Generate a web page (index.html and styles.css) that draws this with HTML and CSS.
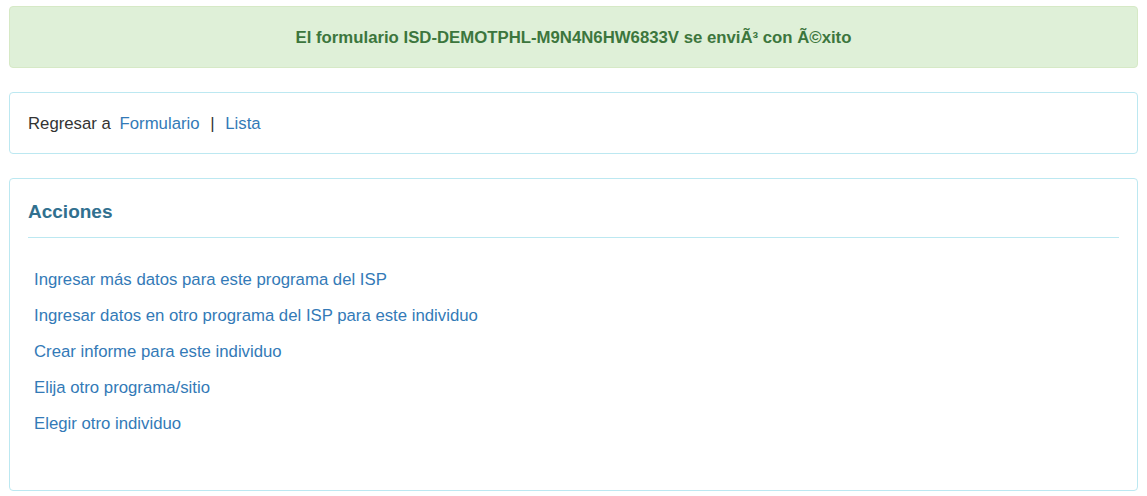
FILE: index.html
```html
<!DOCTYPE html>
<html lang="es">
<head>
    <meta charset="UTF-8">
    <meta name="viewport" content="width=device-width, initial-scale=1.0">
    <title>Formulario enviado</title>
    <link rel="stylesheet" href="styles.css">
</head>
<body>
    <!-- Success message -->
    <div class="alert alert-success" role="alert">
        El formulario ISD-DEMOTPHL-M9N4N6HW6833V se enviÃ³ con Ã©xito
    </div>

    <!-- Back links -->
    <div class="panel">
        <div class="panel-body back-links">
            Regresar a <a href="#">Formulario</a> <span class="sep">|</span> <a href="#">Lista</a>
        </div>
    </div>

    <!-- Actions -->
    <div class="panel panel-actions">
        <h4 class="panel-title">Acciones</h4>
        <ul class="action-list">
            <li><a href="#">Ingresar más datos para este programa del ISP</a></li>
            <li><a href="#">Ingresar datos en otro programa del ISP para este individuo</a></li>
            <li><a href="#">Crear informe para este individuo</a></li>
            <li><a href="#">Elija otro programa/sitio</a></li>
            <li><a href="#">Elegir otro individuo</a></li>
        </ul>
    </div>
</body>
</html>
```

FILE: styles.css
```css
/* Base */
* {
    margin: 0;
    padding: 0;
    box-sizing: border-box;
}

body {
    font-family: "Liberation Sans", Arial, Helvetica, sans-serif;
    font-size: 16.75px;
    line-height: 22px;
    color: #333333;
    background: #ffffff;
    padding: 6px 9px 0 9px;
}

a {
    color: #337ab7;
    text-decoration: none;
}

/* Alert */
.alert {
    border: 1px solid #d6e9c6;
    border-radius: 4px;
    padding: 20px 18px 18px 18px;
    text-align: center;
    font-weight: bold;
    margin-bottom: 24px;
}

.alert-success {
    background: #dff0d8;
    color: #3c763d;
}

/* Panels */
.panel {
    border: 1px solid #bce8f1;
    border-radius: 4px;
    margin-bottom: 24px;
}

.panel-body {
    padding: 20px 18px 18px 18px;
}

.back-links a {
    margin: 0 4px;
}

.back-links .sep {
    margin: 0 2px;
}

.panel-actions {
    padding: 23px 18px 48px 18px;
    height: 313px;
}

.panel-title {
    font-size: 19px;
    line-height: 20px;
    font-weight: bold;
    color: #31708f;
    padding-bottom: 15px;
    border-bottom: 1px solid #bce8f1;
}

.action-list {
    list-style: none;
    padding: 24px 6px 0 6px;
}

.action-list li {
    line-height: 36px;
}
```
